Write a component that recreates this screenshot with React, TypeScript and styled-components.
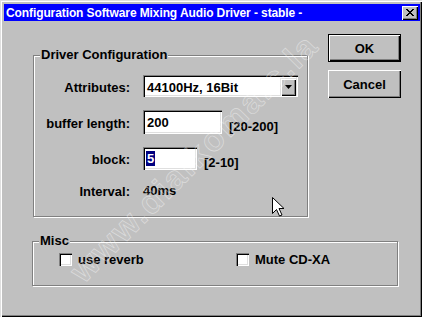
import styled, { createGlobalStyle } from 'styled-components'

const GlobalStyle = createGlobalStyle`
  html, body {
    margin: 0;
    padding: 0;
    background: #c0c0c0;
  }
  body {
    font-family: "Liberation Sans", Arial, sans-serif;
    font-size: 13px;
    font-weight: bold;
    color: #000;
  }
`

const Window = styled.div`
  position: relative;
  width: 422px;
  height: 317px;
  box-sizing: border-box;
  padding: 4px 2px 2px 4px;
  background: #c0c0c0;
  overflow: hidden;
  box-shadow: inset 1px 1px 0 #dfdfdf, inset 2px 2px 0 #fff,
    inset -1px -1px 0 #000, inset -2px -2px 0 #808080;
`

const TitleBar = styled.div`
  height: 17px;
  background: #0000ff;
  display: flex;
  align-items: center;
  justify-content: space-between;
  padding: 0 2px 0 2px;
`

const Title = styled.span`
  color: #fff;
  font-size: 12px;
  letter-spacing: -0.1px;
  white-space: nowrap;
`

const CloseButton = styled.div`
  width: 16px;
  height: 14px;
  background: #c0c0c0;
  display: flex;
  align-items: center;
  justify-content: center;
  box-shadow: inset 1px 1px 0 #fff, inset -1px -1px 0 #000,
    inset -2px -2px 0 #808080;
`

const Body = styled.div`
  padding: 13px 0 0 29px;
`

const TopRow = styled.div`
  display: flex;
  align-items: flex-start;
`

const Group = styled.div<{ $width: number; $height: number }>`
  position: relative;
  box-sizing: border-box;
  width: ${(p) => p.$width}px;
  height: ${(p) => p.$height}px;
  border: 1px solid #808080;
  box-shadow: inset 1px 1px 0 #fff, 1px 1px 0 #fff;
`

const DriverGroup = styled(Group)`
  margin-top: 21px;
`

const MiscGroup = styled(Group)`
  margin: 24px 0 0 -1px;
  padding: 10px 0 0 26px;
  display: flex;
`

const GroupLabel = styled.span`
  position: absolute;
  top: -9px;
  left: 6px;
  padding: 0 1px;
  background: #c0c0c0;
  line-height: 16px;
`

const Form = styled.div`
  display: flex;
  flex-direction: column;
  gap: 12px;
  padding-top: 18px;
`

const Row = styled.div<{ $height?: number }>`
  display: flex;
  align-items: center;
  height: ${(p) => p.$height ?? 24}px;
`

const Label = styled.span`
  width: 96px;
  margin-right: 13px;
  text-align: right;
  padding-top: 2px;
  white-space: nowrap;
`

const Field = styled.div<{ $width: number; $height: number }>`
  box-sizing: border-box;
  width: ${(p) => p.$width}px;
  height: ${(p) => p.$height}px;
  background: #fff;
  display: flex;
  align-items: center;
  padding: 1px 2px 0 4px;
  box-shadow: inset 1px 1px 0 #808080, inset 2px 2px 0 #000,
    inset -1px -1px 0 #fff, inset -2px -2px 0 #dfdfdf;
`

const ComboText = styled.span`
  flex: 1;
  padding-top: 1px;
`

const ComboArrow = styled.div`
  width: 16px;
  height: 18px;
  background: #c0c0c0;
  display: flex;
  align-items: center;
  justify-content: center;
  box-shadow: inset 1px 1px 0 #dfdfdf, inset 2px 2px 0 #fff,
    inset -1px -1px 0 #000, inset -2px -2px 0 #808080;
`

const Selected = styled.span`
  background: #000080;
  color: #fff;
  padding: 0 1px;
  margin-left: -1px;
`

const Range = styled.span`
  margin-left: 7px;
  padding-top: 8px;
  white-space: nowrap;
`

const ButtonColumn = styled.div`
  display: flex;
  flex-direction: column;
  gap: 8px;
  margin-left: 20px;
`

const Button = styled.div<{ $default?: boolean }>`
  box-sizing: border-box;
  width: 73px;
  height: 28px;
  display: flex;
  align-items: center;
  justify-content: center;
  padding-top: 1px;
  border: ${(p) => (p.$default ? '1px solid #000' : 'none')};
  box-shadow: inset 1px 1px 0 #fff, inset -1px -1px 0 #000,
    inset -2px -2px 0 #808080;
`

const CheckItem = styled.div<{ $width?: number }>`
  display: flex;
  align-items: center;
  gap: 6px;
  height: 15px;
  width: ${(p) => (p.$width ? `${p.$width}px` : 'auto')};
`

const CheckBox = styled.div`
  width: 13px;
  height: 13px;
  box-sizing: border-box;
  background: #fff;
  box-shadow: inset 1px 1px 0 #808080, inset 2px 2px 0 #000,
    inset -1px -1px 0 #fff, inset -2px -2px 0 #dfdfdf;
`

const Watermark = styled.div`
  position: absolute;
  left: 194px;
  top: 158px;
  transform: translate(-50%, -50%) rotate(-45deg);
  font-size: 34px;
  letter-spacing: 2px;
  white-space: nowrap;
  color: rgba(255, 255, 255, 0.08);
  -webkit-text-stroke: 0.7px rgba(255, 255, 255, 0.45);
  pointer-events: none;
`

const Cursor = styled.svg`
  position: absolute;
  left: 272px;
  top: 197px;
`

export default function App() {
  return (
    <>
      <GlobalStyle />
      <Window>
        <TitleBar>
          <Title>Configuration Software Mixing Audio Driver - stable -</Title>
          <CloseButton>
            <svg width="8" height="7" viewBox="0 0 8 7">
              <path d="M0 0 L7 7 M1 0 L8 7 M7 0 L0 7 M8 0 L1 7" stroke="#000" strokeWidth="1" />
            </svg>
          </CloseButton>
        </TitleBar>
        <Body>
          <TopRow>
            <DriverGroup $width={275} $height={162}>
              <GroupLabel>Driver Configuration</GroupLabel>
              <Form>
                <Row>
                  <Label>Attributes:</Label>
                  <Field $width={155} $height={22}>
                    <ComboText>44100Hz, 16Bit</ComboText>
                    <ComboArrow>
                      <svg width="7" height="4" viewBox="0 0 7 4">
                        <path d="M0 0 H7 L3.5 4 Z" fill="#000" />
                      </svg>
                    </ComboArrow>
                  </Field>
                </Row>
                <Row>
                  <Label>buffer length:</Label>
                  <Field $width={79} $height={24}>200</Field>
                  <Range>[20-200]</Range>
                </Row>
                <Row>
                  <Label>block:</Label>
                  <Field $width={54} $height={23}>
                    <Selected>5</Selected>
                  </Field>
                  <Range>[2-10]</Range>
                </Row>
                <Row $height={16}>
                  <Label>Interval:</Label>
                  <span>40ms</span>
                </Row>
              </Form>
            </DriverGroup>
            <ButtonColumn>
              <Button $default>OK</Button>
              <Button>Cancel</Button>
            </ButtonColumn>
          </TopRow>
          <MiscGroup $width={366} $height={45}>
            <GroupLabel>Misc</GroupLabel>
            <CheckItem $width={177}>
              <CheckBox />
              use reverb
            </CheckItem>
            <CheckItem>
              <CheckBox />
              Mute CD-XA
            </CheckItem>
          </MiscGroup>
        </Body>
        <Watermark>www.dialkoma.c.la</Watermark>
        <Cursor width="13" height="20" viewBox="0 0 13 20">
          <path
            d="M0.5 0.5 L0.5 16.5 L4.5 12.5 L7.5 19 L10 18 L7 11.5 L12 11.5 Z"
            fill="#fff"
            stroke="#000"
            strokeWidth="1"
          />
        </Cursor>
      </Window>
    </>
  )
}
